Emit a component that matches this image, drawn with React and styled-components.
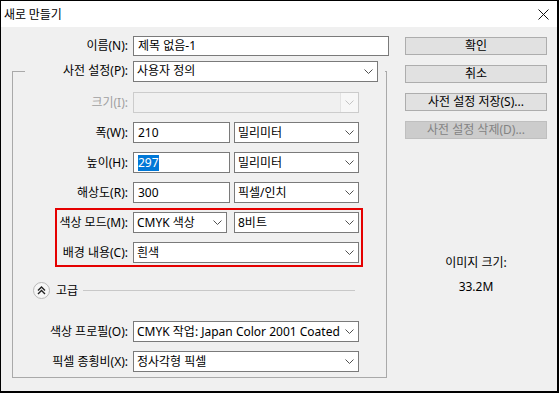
import React from "react";
import styled, { createGlobalStyle } from "styled-components";

const Global = createGlobalStyle`
  html, body { margin: 0; padding: 0; background: #fff; }
  * { box-sizing: border-box; }
  body {
    font-family: "Noto Sans", "Noto Sans CJK KR", sans-serif;
    font-size: 12px;
    color: #000;
  }
`;

const Window = styled.div`
  width: 559px;
  height: 393px;
  border: 1px solid #000;
  border-right-width: 2px;
  border-bottom-width: 2px;
  display: flex;
  flex-direction: column;
  background: #f0f0f0;
`;

const TitleBar = styled.div`
  height: 26px;
  flex: none;
  background: #fff;
  display: flex;
  align-items: center;
  justify-content: space-between;
  padding: 0 8px 0 3px;
`;

const Title = styled.span`
  font-family: "Noto Sans CJK KR", sans-serif;
  font-size: 12px;
  line-height: 16px;
`;

const Body = styled.div`
  flex: 1;
  display: flex;
  padding: 9px 0 0 11px;
`;

const LeftPane = styled.div`
  width: 375px;
  display: flex;
  flex-direction: column;
`;

const RightPane = styled.div`
  width: 142px;
  margin-left: 18px;
  padding-top: 1px;
  display: flex;
  flex-direction: column;
  gap: 10px;
`;

const Row = styled.div`
  display: flex;
  align-items: center;
  height: ${(p) => p.$h || 21}px;
  margin-top: ${(p) => p.$mt || 0}px;
`;

const Label = styled.div`
  width: ${(p) => p.$w}px;
  flex: none;
  text-align: right;
  padding-right: 5px;
  line-height: 16px;
  white-space: nowrap;
  color: ${(p) => (p.$disabled ? "#a0a0a0" : "#000")};
`;

const Field = styled.div`
  width: ${(p) => p.$w}px;
  height: ${(p) => p.$h || 21}px;
  flex: none;
  background: #fff;
  border: 1px solid #7a7a7a;
  display: flex;
  align-items: center;
  padding-left: 4px;
  line-height: 16px;
  white-space: nowrap;
`;

const Highlight = styled.span`
  background: #0078d7;
  color: #fff;
`;

const SelectBox = styled.div`
  width: ${(p) => p.$w}px;
  height: 21px;
  flex: none;
  margin-left: ${(p) => p.$ml || 0}px;
  background: ${(p) => (p.$disabled ? "#f0f0f0" : "#fff")};
  border: 1px solid ${(p) => (p.$disabled ? "#cccccc" : "#7a7a7a")};
  display: flex;
  align-items: center;
  line-height: 16px;
  white-space: nowrap;
`;

const SelectText = styled.span`
  flex: 1;
  padding-left: 3px;
  overflow: hidden;
`;

const Arrow = styled.span`
  width: ${(p) => (p.$disabled ? 18 : 17)}px;
  align-self: stretch;
  display: flex;
  align-items: center;
  justify-content: center;
  background: ${(p) => (p.$disabled ? "#f7f7f7" : "transparent")};
  border-left: ${(p) => (p.$disabled ? "1px solid #e3e3e3" : "none")};
`;

const Chevron = ({ color = "#505050" }) => (
  <svg width="9" height="5" viewBox="0 0 9 5">
    <path d="M0.5 0.5 L4.5 4.5 L8.5 0.5" fill="none" stroke={color} strokeWidth="1" />
  </svg>
);

const Select = ({ w, ml, disabled, children }) => (
  <SelectBox $w={w} $ml={ml} $disabled={disabled}>
    <SelectText>{children}</SelectText>
    <Arrow $disabled={disabled}>
      <Chevron color={disabled ? "#c4c4c4" : "#505050"} />
    </Arrow>
  </SelectBox>
);

const Group = styled.fieldset`
  margin: 4px 0 0 0;
  padding: 0 0 5px 0;
  width: 375px;
  border: 1px solid #a9a9a9;
  min-width: 0;
`;

const Legend = styled.legend`
  margin-left: 12px;
  padding: 0 7px 0 0;
  display: flex;
  align-items: center;
  height: 22px;
`;

const Marked = styled.div`
  margin: 5px 0 0 42px;
  width: 308px;
  border: 2px solid #e50000;
  padding: 2px 0;
`;

const AdvRow = styled.div`
  display: flex;
  align-items: center;
  height: 17px;
  margin: 15px 0 0 20px;
`;

const Toggle = styled.span`
  width: 17px;
  height: 17px;
  border-radius: 50%;
  border: 1px solid #b9b9b9;
  background: #f6f6f6;
  display: flex;
  align-items: center;
  justify-content: center;
`;

const AdvText = styled.span`
  margin-left: 6px;
  line-height: 16px;
`;

const AdvLine = styled.span`
  width: 272px;
  margin-left: 5px;
  border-top: 1px solid #c8c8c8;
`;

const Button = styled.div`
  height: 18px;
  border: 1px solid ${(p) => (p.$disabled ? "#bfbfbf" : "#adadad")};
  background: ${(p) => (p.$disabled ? "#cccccc" : "#e1e1e1")};
  color: ${(p) => (p.$disabled ? "#838383" : "#000")};
  display: flex;
  align-items: center;
  justify-content: center;
  line-height: 16px;
`;

const Info = styled.div`
  margin-top: 106px;
  text-align: center;
  line-height: 16px;
  display: flex;
  flex-direction: column;
  gap: 8px;
`;

export default function App() {
  return (
    <>
      <Global />
      <Window>
        <TitleBar>
          <Title>새로 만들기</Title>
          <svg width="11" height="11" viewBox="0 0 11 11">
            <path d="M0.5 0.5 L10.5 10.5 M10.5 0.5 L0.5 10.5" stroke="#111" strokeWidth="1" />
          </svg>
        </TitleBar>
        <Body>
          <LeftPane>
            <Row $h={20}>
              <Label $w={121}>이름(N):</Label>
              <Field $w={256} $h={20}>제목 없음-1</Field>
            </Row>
            <Group>
              <Legend>
                <Label $w={108}>사전 설정(P):</Label>
                <Select w={245}>사용자 정의</Select>
              </Legend>
              <Row $mt={10}>
                <Label $w={120} $disabled>크기(I):</Label>
                <Select w={226} disabled />
              </Row>
              <Row $mt={9}>
                <Label $w={120}>폭(W):</Label>
                <Field $w={97}>210</Field>
                <Select w={125} ml={4}>밀리미터</Select>
              </Row>
              <Row $mt={9}>
                <Label $w={120}>높이(H):</Label>
                <Field $w={97}>
                  <Highlight>297</Highlight>
                </Field>
                <Select w={125} ml={4}>밀리미터</Select>
              </Row>
              <Row $mt={9}>
                <Label $w={120}>해상도(R):</Label>
                <Field $w={97}>300</Field>
                <Select w={125} ml={4}>픽셀/인치</Select>
              </Row>
              <Marked>
                <Row>
                  <Label $w={76}>색상 모드(M):</Label>
                  <Select w={94}>CMYK 색상</Select>
                  <Select w={125} ml={7}>8비트</Select>
                </Row>
                <Row $mt={9}>
                  <Label $w={76}>배경 내용(C):</Label>
                  <Select w={226}>흰색</Select>
                </Row>
              </Marked>
              <AdvRow>
                <Toggle>
                  <svg width="9" height="9" viewBox="0 0 9 9">
                    <path
                      d="M1 4.5 L4.5 1 L8 4.5 M1 8 L4.5 4.5 L8 8"
                      fill="none"
                      stroke="#222"
                      strokeWidth="1.4"
                    />
                  </svg>
                </Toggle>
                <AdvText>고급</AdvText>
                <AdvLine />
              </AdvRow>
              <Row $mt={22}>
                <Label $w={120}>색상 프로필(O):</Label>
                <Select w={226}>CMYK 작업: Japan Color 2001 Coated</Select>
              </Row>
              <Row $mt={9}>
                <Label $w={120}>픽셀 종횡비(X):</Label>
                <Select w={226}>정사각형 픽셀</Select>
              </Row>
            </Group>
          </LeftPane>
          <RightPane>
            <Button>확인</Button>
            <Button>취소</Button>
            <Button>사전 설정 저장(S)...</Button>
            <Button $disabled>사전 설정 삭제(D)...</Button>
            <Info>
              <span>이미지 크기:</span>
              <span>33.2M</span>
            </Info>
          </RightPane>
        </Body>
      </Window>
    </>
  );
}
